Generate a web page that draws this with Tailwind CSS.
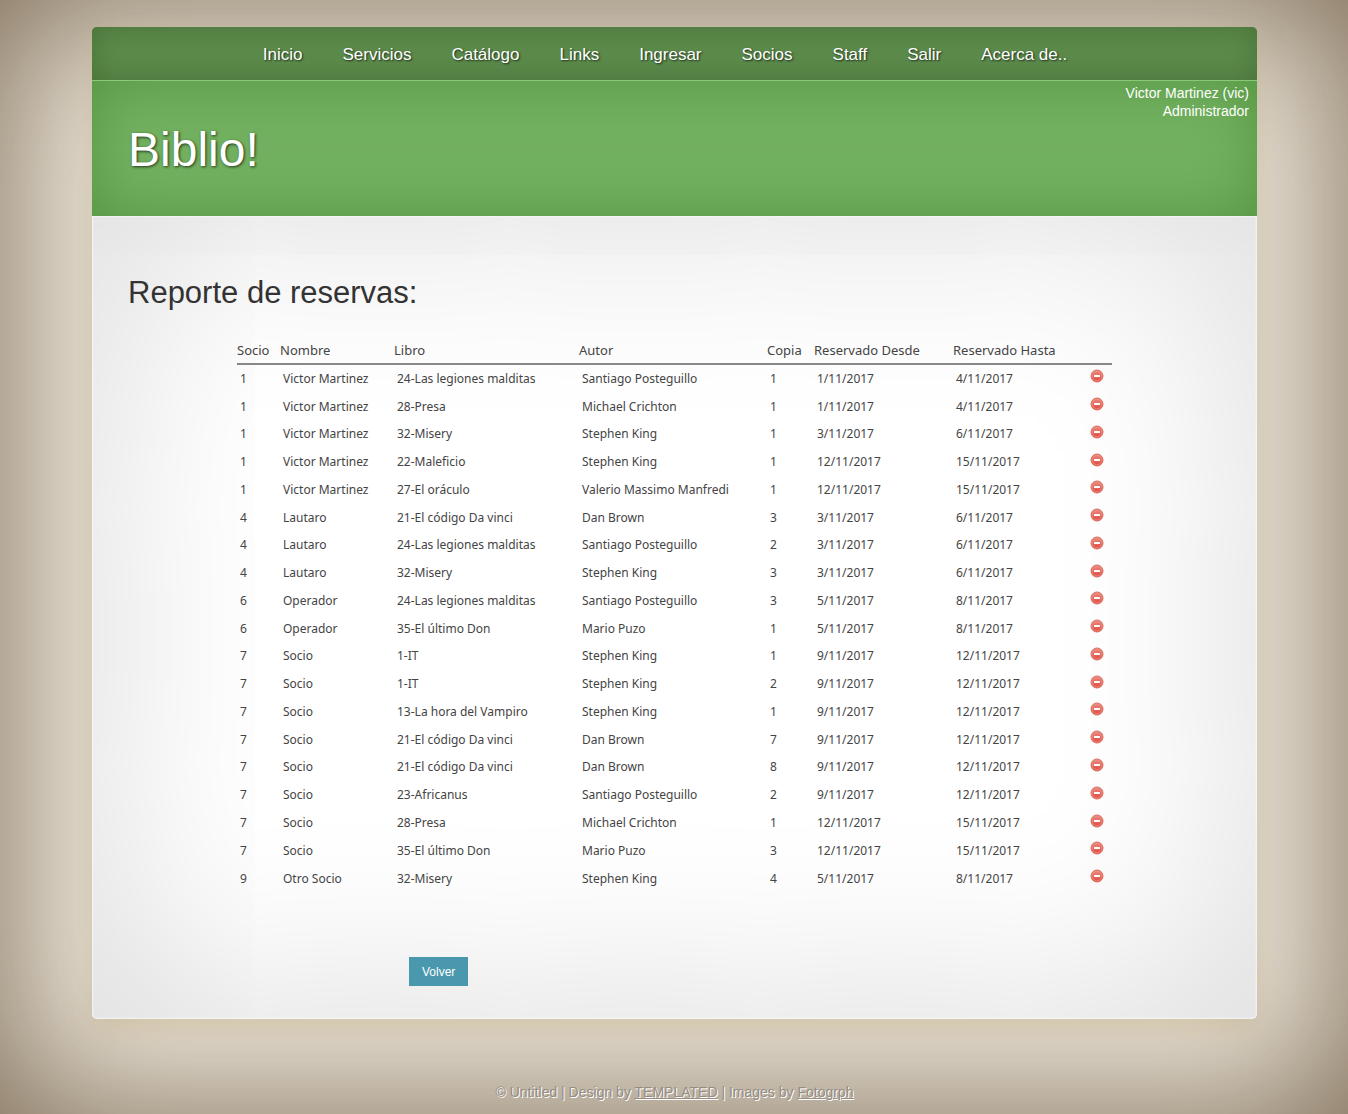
<!DOCTYPE html>
<html lang="es">
<head>
<meta charset="utf-8">
<meta name="viewport" content="width=device-width, initial-scale=1">
<title>Biblio! - Reporte de reservas</title>
<script src="https://cdn.jsdelivr.net/npm/@tailwindcss/browser@4"></script>
</head>
<body class="min-h-screen bg-[#ece6da] shadow-[inset_0_0_160px_#78664f] font-['Liberation_Sans',Arial,sans-serif] pt-[27px] pl-[92px] pr-[91px]">
<svg class="absolute size-0" aria-hidden="true">
  <defs>
    <linearGradient id="red" x1="0" y1="0" x2="0" y2="1"><stop offset="0" stop-color="#e88f84"/><stop offset="1" stop-color="#e2453b"/></linearGradient>
  </defs>
  <symbol id="remove" viewBox="0 0 14 14">
    <circle cx="7" cy="7" r="6" fill="url(#red)" stroke="#d9695c" stroke-width="1"/>
    <circle cx="7" cy="7" r="4.9" fill="none" stroke="#f08f84" stroke-width=".8"/>
    <rect x="4" y="6" width="6" height="2" rx=".5" fill="#fff"/>
  </symbol>
</svg>
<div class="rounded-[5px] shadow-[0_10px_25px_rgba(200,180,140,0.5)]">
  <nav class="h-[53px] rounded-t-[5px] bg-[#5c8b4c] shadow-[inset_0_0_30px_#4a7238] pt-[2px] pr-[19px]">
    <ul class="flex h-full items-center justify-center gap-10 text-[17px] text-white [text-shadow:1px_1px_2px_rgba(0,0,0,0.7)]">
      <li><a href="#">Inicio</a></li>
      <li><a href="#">Servicios</a></li>
      <li><a href="#">Catálogo</a></li>
      <li><a href="#">Links</a></li>
      <li><a href="#">Ingresar</a></li>
      <li><a href="#">Socios</a></li>
      <li><a href="#">Staff</a></li>
      <li><a href="#">Salir</a></li>
      <li><a href="#">Acerca de..</a></li>
    </ul>
  </nav>
  <header class="flex h-[136px] items-start justify-between border-t border-[#8bc878] bg-[#73b160] shadow-[inset_0_0_60px_#559541] pl-9 pr-2">
    <h1 class="pt-[45px] text-[48px] leading-[48px] text-white [text-shadow:1px_1px_3px_rgba(0,0,0,0.7)]">Biblio!</h1>
    <p class="pt-[3px] text-right text-[14px] leading-[18px] text-white">Victor Martinez (vic)<br>Administrador</p>
  </header>
  <main class="rounded-b-[5px] bg-white shadow-[inset_0_0_2px_1px_rgba(255,255,255,0.6),inset_0_0_200px_rgba(0,0,0,0.18)] px-9 pt-[59px] pb-[33px]">
    <h2 class="text-[31px] leading-[36px] text-[#333]">Reporte de reservas:</h2>
    <table class="mx-auto mt-[25px] h-[557px] w-full max-w-[875px] table-fixed border-collapse text-left font-['Noto_Sans',sans-serif] text-[12px] leading-[18px] text-[#444]">
      <colgroup>
        <col class="w-[43px]"><col class="w-[114px]"><col class="w-[185px]"><col class="w-[188px]"><col class="w-[47px]"><col class="w-[139px]"><col class="w-[136px]"><col>
      </colgroup>
      <thead>
        <tr class="h-7 border-b-2 border-[#888] text-[13px] whitespace-nowrap">
          <th class="font-normal">Socio</th><th class="font-normal">Nombre</th><th class="font-normal">Libro</th><th class="font-normal">Autor</th><th class="font-normal">Copia</th><th class="font-normal">Reservado Desde</th><th class="font-normal">Reservado Hasta</th><td></td>
        </tr>
      </thead>
      <tbody id="rows"></tbody>
    </table>
    <button type="button" class="ml-[281px] mt-[64px] block h-[29px] bg-[#4a98ae] px-[13px] text-[12px] text-white">Volver</button>
  </main>
</div>
<footer class="pt-[64px] pb-[12px] text-center text-[14px] leading-[19px] text-[#958c84] [text-shadow:1px_1px_0_#fff]">
  © Untitled | Design by <a href="#" class="underline">TEMPLATED</a> | Images by <a href="#" class="underline">Fotogrph</a>
</footer>
<script>
const data = [
  ["1","Victor Martinez","24-Las legiones malditas","Santiago Posteguillo","1","1/11/2017","4/11/2017"],
  ["1","Victor Martinez","28-Presa","Michael Crichton","1","1/11/2017","4/11/2017"],
  ["1","Victor Martinez","32-Misery","Stephen King","1","3/11/2017","6/11/2017"],
  ["1","Victor Martinez","22-Maleficio","Stephen King","1","12/11/2017","15/11/2017"],
  ["1","Victor Martinez","27-El oráculo","Valerio Massimo Manfredi","1","12/11/2017","15/11/2017"],
  ["4","Lautaro","21-El código Da vinci","Dan Brown","3","3/11/2017","6/11/2017"],
  ["4","Lautaro","24-Las legiones malditas","Santiago Posteguillo","2","3/11/2017","6/11/2017"],
  ["4","Lautaro","32-Misery","Stephen King","3","3/11/2017","6/11/2017"],
  ["6","Operador","24-Las legiones malditas","Santiago Posteguillo","3","5/11/2017","8/11/2017"],
  ["6","Operador","35-El último Don","Mario Puzo","1","5/11/2017","8/11/2017"],
  ["7","Socio","1-IT","Stephen King","1","9/11/2017","12/11/2017"],
  ["7","Socio","1-IT","Stephen King","2","9/11/2017","12/11/2017"],
  ["7","Socio","13-La hora del Vampiro","Stephen King","1","9/11/2017","12/11/2017"],
  ["7","Socio","21-El código Da vinci","Dan Brown","7","9/11/2017","12/11/2017"],
  ["7","Socio","21-El código Da vinci","Dan Brown","8","9/11/2017","12/11/2017"],
  ["7","Socio","23-Africanus","Santiago Posteguillo","2","9/11/2017","12/11/2017"],
  ["7","Socio","28-Presa","Michael Crichton","1","12/11/2017","15/11/2017"],
  ["7","Socio","35-El último Don","Mario Puzo","3","12/11/2017","15/11/2017"],
  ["9","Otro Socio","32-Misery","Stephen King","4","5/11/2017","8/11/2017"]
];
document.getElementById("rows").innerHTML = data.map(r =>
  "<tr>" + r.map(c => `<td class="pl-[3px] pb-[1px] whitespace-nowrap">${c}</td>`).join("") +
  `<td class="pl-[1px] pb-[6px]"><button type="button" aria-label="Eliminar reserva" class="block size-[14px]"><svg class="size-[14px]"><use href="#remove"/></svg></button></td></tr>`
).join("");
</script>
</body>
</html>
